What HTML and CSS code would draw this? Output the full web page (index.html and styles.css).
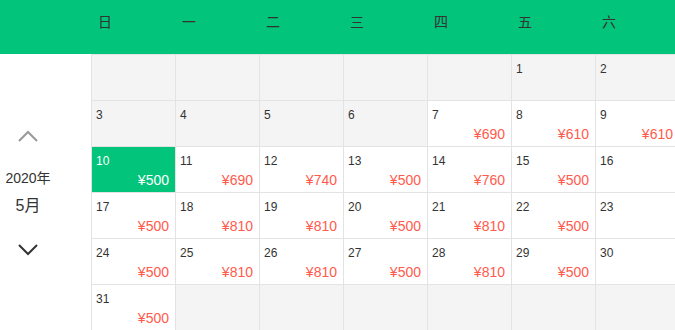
FILE: index.html
```html
<!DOCTYPE html>
<html lang="zh-CN">
<head>
    <meta charset="UTF-8">
    <meta name="viewport" content="width=device-width, initial-scale=1.0">
    <title>价格日历</title>
    <link rel="stylesheet" href="styles.css">
</head>
<body>

    <!-- Weekday header -->
    <div class="week-bar">
        <div class="side-space"></div>
        <div class="week-days">
            <div class="week-day">日</div>
            <div class="week-day">一</div>
            <div class="week-day">二</div>
            <div class="week-day">三</div>
            <div class="week-day">四</div>
            <div class="week-day">五</div>
            <div class="week-day">六</div>
        </div>
    </div>

    <div class="calendar">
        <!-- Month switcher -->
        <div class="month-nav">
            <svg class="arrow arrow-up" width="20" height="12" viewBox="0 0 20 12">
                <polyline points="1,11 10,2 19,11" fill="none" stroke="#999" stroke-width="2"/>
            </svg>
            <div class="year">2020年</div>
            <div class="month">5月</div>
            <svg class="arrow arrow-down" width="20" height="12" viewBox="0 0 20 12">
                <polyline points="1,1 10,10 19,1" fill="none" stroke="#333" stroke-width="2"/>
            </svg>
        </div>

        <div class="days" id="days"></div>
    </div>

    <script>
        // Prices for May 2020, keyed by day
        const prices = {
            7: 690, 8: 610, 9: 610,
            10: 500, 11: 690, 12: 740, 13: 500, 14: 760, 15: 500,
            17: 500, 18: 810, 19: 810, 20: 500, 21: 810, 22: 500,
            24: 500, 25: 810, 26: 810, 27: 500, 28: 810, 29: 500,
            31: 500
        };
        const firstWeekday = 5; // May 1st 2020 is a Friday
        const daysInMonth = 31;
        const today = 10;

        const box = document.getElementById('days');
        const total = Math.ceil((firstWeekday + daysInMonth) / 7) * 7;

        for (let i = 0; i < total; i++) {
            const day = i - firstWeekday + 1;
            const cell = document.createElement('div');
            cell.className = 'day';

            if (day < 1 || day > daysInMonth) {
                cell.classList.add('disabled');
            } else {
                if (day < 7) cell.classList.add('disabled');
                if (day === today) cell.classList.add('active');
                let html = '<span class="num">' + day + '</span>';
                if (prices[day]) html += '<span class="price">¥' + prices[day] + '</span>';
                cell.innerHTML = html;
            }
            box.appendChild(cell);
        }
    </script>

</body>
</html>
```

FILE: styles.css
```css
body {
    margin: 0;
    width: 675px;
    overflow: hidden;
    font-family: "Liberation Sans", "Noto Sans CJK SC", sans-serif;
    color: #333;
    background: #fff;
}
.week-bar {
    display: flex;
    height: 54px;
    background-color: #02c47b;
}
.side-space {
    flex: 0 0 91px;
}
.week-days {
    display: flex;
}
.week-day {
    flex: 0 0 84px;
    box-sizing: border-box;
    padding: 14px 0 0 7px;
    font-size: 14px;
    line-height: 16px;
    color: #333;
}
.calendar {
    display: flex;
}
.month-nav {
    flex: 0 0 91px;
    display: flex;
    flex-direction: column;
    align-items: center;
    padding-right: 35px;
    box-sizing: border-box;
}
.arrow {
    display: block;
}
.arrow-up {
    margin-top: 76px;
}
.year {
    margin-top: 28px;
    font-size: 14px;
    line-height: 17px;
}
.month {
    margin-top: 9px;
    font-size: 16px;
    line-height: 20px;
}
.arrow-down {
    margin-top: 28px;
}
.days {
    display: grid;
    grid-template-columns: repeat(7, 84px);
    grid-auto-rows: 46px;
}
.day {
    box-sizing: border-box;
    border-top: 1px solid #e3e3e3;
    border-left: 1px solid #e3e3e3;
    padding: 7px 6px 4px 4px;
    display: flex;
    flex-direction: column;
    background: #fff;
}
.day.disabled {
    background-color: #f4f4f4;
}
.day.active {
    background-color: #02c47b;
}
.num {
    font-size: 12px;
    line-height: 14px;
    color: #333;
}
.price {
    margin-top: auto;
    text-align: right;
    font-size: 14px;
    line-height: 16px;
    color: #ff5a4c;
}
.day.active .num,
.day.active .price {
    color: #fff;
}
```
